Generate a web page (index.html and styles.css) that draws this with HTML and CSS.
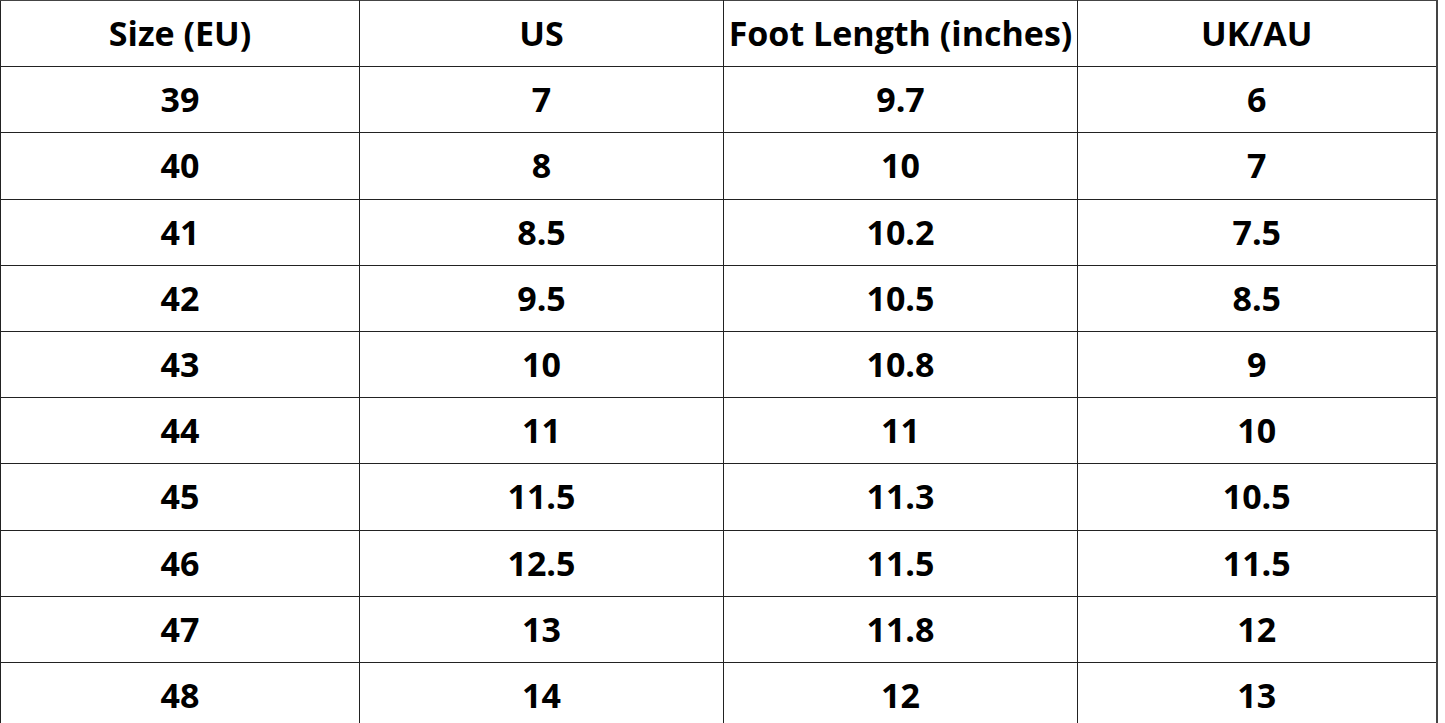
FILE: index.html
```html
<!DOCTYPE html>
<html>
<head>
<meta charset="utf-8">
<link rel="stylesheet" href="styles.css">
</head>
<body>
<table class="size-table">
  <colgroup>
    <col class="c1"><col class="c2"><col class="c3"><col class="c4">
  </colgroup>
  <thead>
    <tr><th>Size (EU)</th><th>US</th><th>Foot Length (inches)</th><th>UK/AU</th></tr>
  </thead>
  <tbody>
    <tr><td>39</td><td>7</td><td>9.7</td><td>6</td></tr>
    <tr><td>40</td><td>8</td><td>10</td><td>7</td></tr>
    <tr><td>41</td><td>8.5</td><td>10.2</td><td>7.5</td></tr>
    <tr><td>42</td><td>9.5</td><td>10.5</td><td>8.5</td></tr>
    <tr><td>43</td><td>10</td><td>10.8</td><td>9</td></tr>
    <tr><td>44</td><td>11</td><td>11</td><td>10</td></tr>
    <tr><td>45</td><td>11.5</td><td>11.3</td><td>10.5</td></tr>
    <tr><td>46</td><td>12.5</td><td>11.5</td><td>11.5</td></tr>
    <tr><td>47</td><td>13</td><td>11.8</td><td>12</td></tr>
    <tr><td>48</td><td>14</td><td>12</td><td>13</td></tr>
  </tbody>
</table>
</body>
</html>
```
FILE: styles.css
```css
html, body {
  margin: 0;
  padding: 0;
  background: #ffffff;
}
.size-table {
  border-collapse: collapse;
  table-layout: fixed;
  width: 1436px;
  font-family: "Open Sans", "Liberation Sans", sans-serif;
  font-weight: 700;
  font-size: 34px;
  color: #000;
}
.c1 { width: 359px; }
.c2 { width: 364px; }
.c3 { width: 354px; }
.c4 { width: 359px; }
.size-table th,
.size-table td {
  border: 1px solid #222;
  height: 64.2px;
  padding: 0 0 1px 0;
  text-align: center;
  vertical-align: middle;
  font-weight: 700;
  line-height: 1;
  white-space: nowrap;
}
.size-table th:last-child,
.size-table td:last-child {
  border-right: 2px solid #444;
}
.size-table thead th {
  border-top: 1px solid #444;
}
```
